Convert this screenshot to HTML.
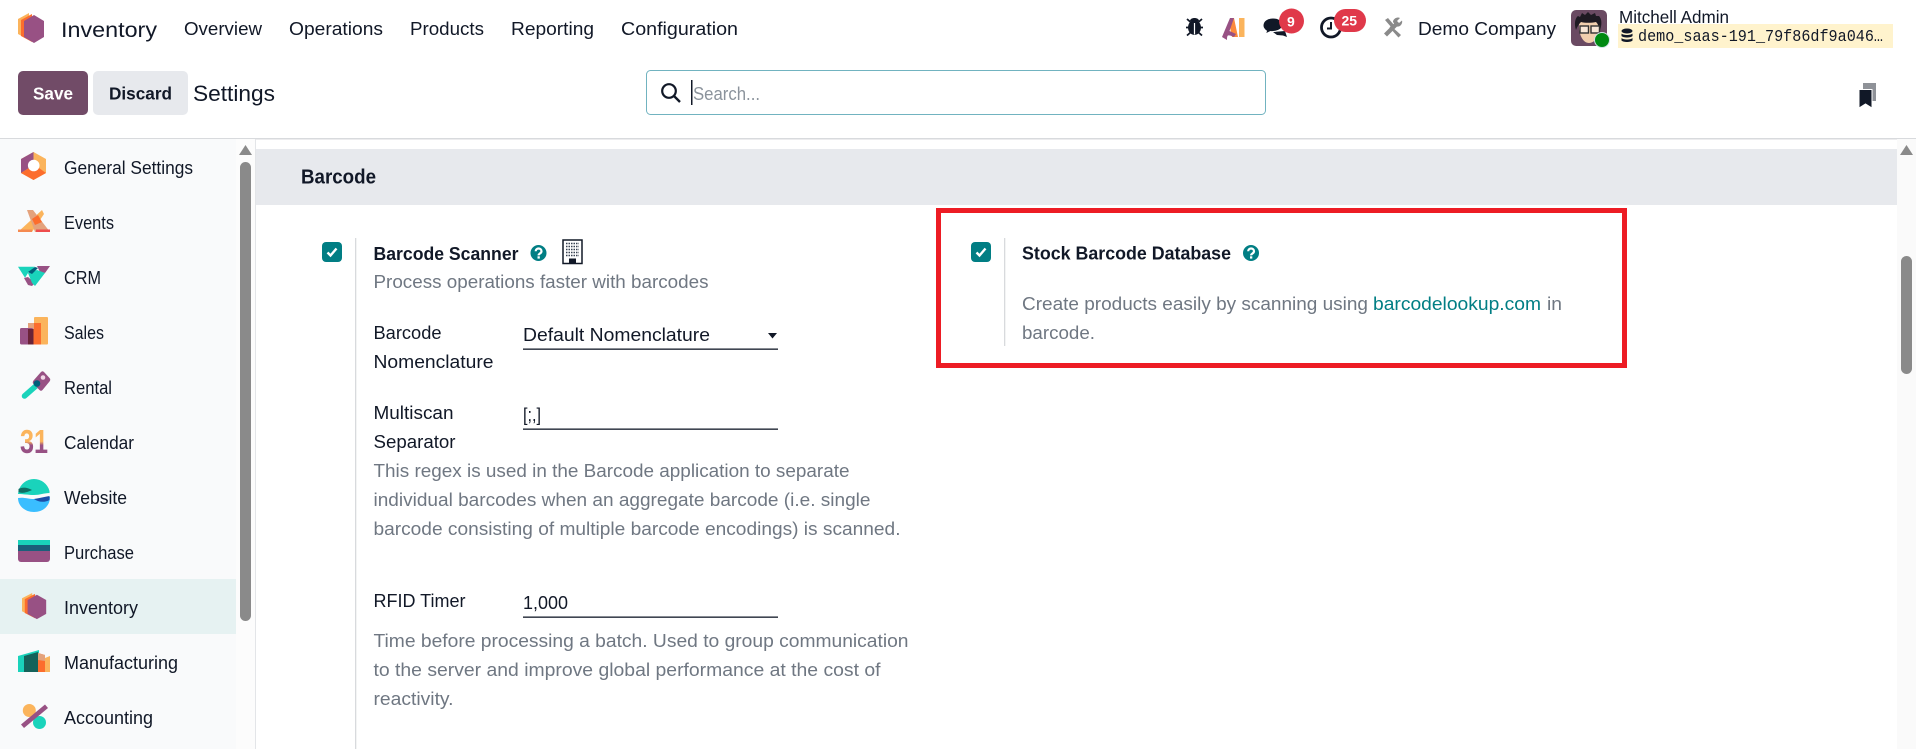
<!DOCTYPE html>
<html lang="en">
<head>
<meta charset="utf-8">
<title>Settings - Inventory</title>
<style>
html,body{margin:0;padding:0;width:1916px;height:749px;overflow:hidden;background:#fff}
svg{display:block}
text{font-family:"Liberation Sans","Noto Sans CJK JP",sans-serif;fill:#111827;font-size:18.5px}
.g{fill:#6f7782}
.b{font-weight:700}
.m{font-family:"Liberation Mono",monospace;font-size:17px}
</style>
</head>
<body>
<svg width="1916" height="749" viewBox="0 0 1916 749" xmlns="http://www.w3.org/2000/svg">
<defs>
<g id="inv">
<polygon points="11,0 0,6 0,21 11,27" fill="#fbb45c"/>
<polygon points="14,1 3,7 3,23 14,29" fill="#fc6d2d"/>
<polygon points="16,2 26,8 26,24 16,30 6,24 6,8" fill="#985184"/>
</g>
<g id="chk">
<rect width="20" height="20" rx="4" fill="#017e84"/>
<path d="M5.500 10.500l3 3 6-7" fill="none" stroke="#fff" stroke-width="2.400"/>
</g>
<g id="help">
<circle cx="8" cy="8" r="8" fill="#017e84"/>
<path d="M5.200 6.200c0-3.600 5.800-3.600 5.800 0 0 2.300-2.900 2.300-2.900 4.200" fill="none" stroke="#fff" stroke-width="2.200"/>
<rect x="7" y="11.300" width="2.300" height="2.300" fill="#fff"/>
</g>
<linearGradient id="g31" x1="0" y1="0" x2="0" y2="1">
<stop offset="0.5" stop-color="#fbb45c"/><stop offset="0.6" stop-color="#985184"/>
</linearGradient>
</defs>

<!-- top bar -->
<use href="#inv" x="18" y="13"/>
<text x="61" y="37" style="font-size:21px" textLength="96" lengthAdjust="spacingAndGlyphs">Inventory</text>
<text x="184" y="35" textLength="78" lengthAdjust="spacingAndGlyphs">Overview</text>
<text x="289" y="35" textLength="94" lengthAdjust="spacingAndGlyphs">Operations</text>
<text x="410" y="35" textLength="74" lengthAdjust="spacingAndGlyphs">Products</text>
<text x="511" y="35" textLength="83" lengthAdjust="spacingAndGlyphs">Reporting</text>
<text x="621" y="35" textLength="117" lengthAdjust="spacingAndGlyphs">Configuration</text>

<!-- systray: bug -->
<g fill="#111827">
<ellipse cx="1194.500" cy="27.500" rx="6.500" ry="7.500"/>
<path d="M1190 21c0-4 9-4 9 0z"/>
<path d="M1187 19l4 3.500M1202 19l-4 3.500M1186 27.500h17M1187 35.500l4-3.500M1202 35.500l-4-3.500" stroke="#111827" stroke-width="1.800" fill="none"/>
<rect x="1193.900" y="23" width="1.200" height="11.500" fill="#fff"/>
</g>
<!-- AI -->
<path d="M1230 18h4l4 19h-6l-1.500-7z" fill="#fc8a3c"/>
<path d="M1222 37l8-19h4l-4.500 13 6.500 3-2 3c-3-1.500-5-2-6-1.500-1 .5-1 3-1 4.500z" fill="#985184"/>
<rect x="1239" y="18" width="5.500" height="19" fill="#fbb45c"/>
<!-- chat -->
<path d="M1273 32l12-1 2 6-4-1.500-6-.5z" fill="#111827"/>
<path d="M1273 18c-6 0-10 3-10 7.500 0 3 2 4.500 3.500 5.500l-1 3 5-2.500c5 .5 12-1.500 12-6.500 0-4.500-4-7-9.500-7z" fill="#111827" stroke="#fff" stroke-width="1"/>
<circle cx="1291.500" cy="21" r="12.500" fill="#e0394a"/>
<text x="1287" y="26.500" style="font-size:14px;fill:#fff" class="b">9</text>
<!-- clock -->
<circle cx="1331" cy="27.500" r="9.500" fill="none" stroke="#111827" stroke-width="2.800"/>
<path d="M1331 22v6.500h-4" fill="none" stroke="#111827" stroke-width="2"/>
<rect x="1334" y="9" width="32" height="23" rx="11.500" fill="#e0394a"/>
<text x="1341.500" y="25.500" style="font-size:14px;fill:#fff" class="b">25</text>
<!-- tools -->
<path d="M1385 20l3-2 6 7-2.500 2.500z" fill="#8a8a8a"/>
<path d="M1391 26l10 9-2.500 2.500-9-10z" fill="#8a8a8a"/>
<path d="M1384 33.500l11-11 3 3-11 11z" fill="#8a8a8a"/>
<path d="M1393 22c0-3 4-5.500 7-4l-3 3 2 2 3-2.500c1 3-2 7-5.500 6z" fill="#8a8a8a"/>
<text x="1418" y="35" textLength="138" lengthAdjust="spacingAndGlyphs">Demo Company</text>

<!-- avatar -->
<rect x="1571" y="10" width="36" height="36" rx="5" fill="#6a4a62"/>
<path d="M1579 26c0-7 4-10 10-10s10 3 10 11c0 9-4 16-10 16s-10-8-10-17z" fill="#f2cfae"/>
<path d="M1576 30c-2-6-1-12 2-14l2 1 2-4 3 2 3-3 3 3 4-2 1 3 3 0c3 3 3 9 1 14-1-3-2-6-4-8-5 1-11 1-15 0-2 2-4 5-5 8z" fill="#1e1a22"/>
<rect x="1580" y="26" width="8.500" height="7" fill="#fff" fill-opacity=".5" stroke="#333" stroke-width="1.400"/>
<rect x="1591" y="26" width="8.500" height="7" fill="#fff" fill-opacity=".5" stroke="#333" stroke-width="1.400"/>
<circle cx="1602" cy="40" r="7.500" fill="#008a12" stroke="#cfe3e6" stroke-width="1"/>

<text x="1619" y="23" style="font-size:17.500px" textLength="110" lengthAdjust="spacingAndGlyphs">Mitchell Admin</text>
<rect x="1618" y="24" width="275" height="24" fill="#fff3cd"/>
<g fill="#111827">
<ellipse cx="1627" cy="31" rx="5.500" ry="2.500"/>
<path d="M1621.500 33.500c1.500 2 9.500 2 11 0v2.500c-1.500 2-9.500 2-11 0z"/>
<path d="M1621.500 38c1.500 2 9.500 2 11 0v2.500c-1.500 2-9.500 2-11 0z"/>
</g>
<text x="1638" y="41" class="m" textLength="245" lengthAdjust="spacingAndGlyphs">demo_saas-191_79f86df9a046…</text>

<!-- control panel -->
<rect x="18" y="71" width="70" height="44" rx="5" fill="#714b67"/>
<text x="33" y="99.500" class="b" style="font-size:17.500px;fill:#fff" textLength="40" lengthAdjust="spacingAndGlyphs">Save</text>
<rect x="93" y="71" width="95" height="44" rx="5" fill="#e7e9ed"/>
<text x="109" y="99.500" class="b" style="font-size:17.500px" textLength="63" lengthAdjust="spacingAndGlyphs">Discard</text>
<text x="193" y="101" style="font-size:22px" textLength="82" lengthAdjust="spacingAndGlyphs">Settings</text>
<rect x="646.500" y="70.500" width="619" height="44" rx="4" fill="#fff" stroke="#71b3c0" stroke-width="1"/>
<circle cx="669" cy="91" r="6.800" fill="none" stroke="#111827" stroke-width="2.200"/>
<path d="M674 96l6 6" stroke="#111827" stroke-width="2.400"/>
<rect x="691" y="80" width="1.500" height="25" fill="#111827"/>
<text x="693" y="100" style="font-size:18.500px;fill:#8b939c" textLength="67" lengthAdjust="spacingAndGlyphs">Search...</text>
<path d="M1863 83h13v18h-13z" fill="#8f9298"/>
<path d="M1859 89.500h13v18.500l-6.500-4-6.500 4z" fill="#111827" stroke="#fff" stroke-width="1"/>

<rect x="0" y="138" width="1916" height="1.500" fill="#d8dadd"/>

<!-- sidebar -->
<rect x="0" y="139" width="236" height="610" fill="#f9fafb"/>
<rect x="236" y="139" width="19" height="610" fill="#fcfcfc"/>
<rect x="255" y="139" width="1" height="610" fill="#e3e5e8"/>
<polygon points="245.500,145 252,155 239,155" fill="#8a8a8a"/>
<rect x="240" y="162" width="11" height="459" rx="5.500" fill="#8a8a8a"/>
<rect x="0" y="579" width="236" height="55" fill="#e6f2f2"/>

<!-- General Settings -->
<polygon points="33.500,152 46,159 46,173 33.500,180 21,173 21,159" fill="#fbb45c"/>
<polygon points="33.500,152 21,159 21,173 29,168 33.500,160" fill="#985184"/>
<polygon points="21,173 33.500,180 46,173 39,168 29,168" fill="#fc6d2d"/>
<circle cx="33.700" cy="165.500" r="5.800" fill="#fff"/>
<!-- Events -->
<polygon points="42,210 18,232 32,232 44,214" fill="#fbb45c"/>
<polygon points="27,210 33,210 50,232 35,232" fill="#e4a27c"/>
<polygon points="32,219 38,215 42,222 35,225" fill="#fc6d2d"/>
<rect x="36" y="229.500" width="14" height="2.500" fill="#ee4c4c"/>
<rect x="18" y="229.500" width="14" height="2.500" fill="#f58a50"/>
<!-- CRM -->
<polygon points="18,266.700 35,266.700 28,273 25,277.700" fill="#1ad3bb"/>
<polygon points="37,266 50,266 45,273 40,272" fill="#985184"/>
<polygon points="24,278 28,277 35,283 32,286 28,285" fill="#985184"/>
<polygon points="28,273 37,270 45,273 35,286 32,283" fill="#1ad3bb"/>
<polygon points="28,272 35,267 38,268 32,274" fill="#005e7a"/>
<!-- Sales -->
<rect x="34" y="317" width="14" height="27.500" rx="1" fill="#fbb45c"/>
<rect x="28" y="323" width="13" height="21.500" fill="#fc6d2d"/>
<rect x="28" y="323" width="6" height="6" fill="#e4a27c"/>
<rect x="20" y="328" width="13" height="16.500" rx="1.500" fill="#985184"/>
<rect x="28" y="329" width="5.500" height="15.500" fill="#6a2338"/>
<!-- Rental -->
<path d="M36 398l-12-0" stroke="none"/>
<path d="M37 385L24.500 396" stroke="#1ad3bb" stroke-width="5.500" stroke-linecap="round" fill="none"/>
<path d="M41 372c1-1 2-1 3 0l5.500 6c1 1 1 2 0 3.500l-7 8.500c-1 1-2 1-3 0l-6-6c-1-1-1-2 0-3.500z" fill="#985184"/>
<circle cx="43" cy="377.500" r="2.300" fill="#f1d7e6"/>
<circle cx="37" cy="383.500" r="3.300" fill="#005e7a"/>
<!-- Calendar -->
<text x="20" y="453" class="b" style="font-size:33px;fill:url(#g31)" textLength="28" lengthAdjust="spacingAndGlyphs">31</text>
<!-- Website -->
<path d="M18.500 491A16 16 0 0 1 49.500 491L49.500 493C44 493 40 495 34 495C28 495 24 494 18 494z" fill="#1ad3bb"/>
<path d="M18 498C24 497 28 499 34 499C40 499 44 497 50 497C50 506 43 512 34 512C25 512 18 506 18 498z" fill="#3abeff"/>
<path d="M18.500 489C22 487 27 487 32 490C28 492 22 494 18.500 492z" fill="#0f6e64"/>
<path d="M34 499C40 498 44 497 49.500 496L49.500 500C44 503 38 502 34 499z" fill="#1c4ea8"/>
<!-- Purchase -->
<path d="M18 551h32v8a3 3 0 0 1-3 3H21a3 3 0 0 1-3-3z" fill="#985184"/>
<rect x="18" y="540" width="32" height="5" fill="#1ad3bb"/>
<rect x="18" y="545" width="32" height="6" fill="#1b5f7a"/>
<!-- Inventory -->
<use href="#inv" transform="translate(22 593) scale(.93 .87)"/>
<!-- Manufacturing -->
<polygon points="18,656 39,650 39,672 18,672" fill="#1ad3bb"/>
<polygon points="24,656 38,652 38,672 24,672" fill="#15625a"/>
<polygon points="38,653 45,655 45,672 38,672" fill="#fc6d2d"/>
<polygon points="38,653 45,655 45,661 38,660" fill="#e4a27c"/>
<polygon points="45,658 50,656 50,672 45,672" fill="#fbb45c"/>
<!-- Accounting -->
<circle cx="29.300" cy="710.500" r="6.500" fill="#fbb45c"/>
<circle cx="39.500" cy="722.500" r="6.500" fill="#1ad3bb"/>
<path d="M21 724.500l24-20 3 3.500-24 20z" fill="#985184"/>

<text x="64" y="174" textLength="129" lengthAdjust="spacingAndGlyphs">General Settings</text>
<text x="64" y="229" textLength="50" lengthAdjust="spacingAndGlyphs">Events</text>
<text x="64" y="284" textLength="37" lengthAdjust="spacingAndGlyphs">CRM</text>
<text x="64" y="339" textLength="40" lengthAdjust="spacingAndGlyphs">Sales</text>
<text x="64" y="394" textLength="48" lengthAdjust="spacingAndGlyphs">Rental</text>
<text x="64" y="449" textLength="70" lengthAdjust="spacingAndGlyphs">Calendar</text>
<text x="64" y="504" textLength="63" lengthAdjust="spacingAndGlyphs">Website</text>
<text x="64" y="559" textLength="70" lengthAdjust="spacingAndGlyphs">Purchase</text>
<text x="64" y="614" textLength="74" lengthAdjust="spacingAndGlyphs">Inventory</text>
<text x="64" y="669" textLength="114" lengthAdjust="spacingAndGlyphs">Manufacturing</text>
<text x="64" y="724" textLength="89" lengthAdjust="spacingAndGlyphs">Accounting</text>

<!-- main -->
<rect x="256" y="149" width="1641" height="56" fill="#e7e9ed"/>
<text x="301" y="183.500" class="b" style="font-size:20px" textLength="75" lengthAdjust="spacingAndGlyphs">Barcode</text>

<rect x="1897" y="139" width="19" height="610" fill="#fafafa"/>
<polygon points="1906.500,145 1913,155 1900,155" fill="#8a8a8a"/>
<rect x="1901" y="256" width="11" height="118" rx="5.500" fill="#8a8a8a"/>

<!-- left setting -->
<use href="#chk" x="322" y="242"/>
<rect x="355" y="238" width="1.300" height="511" fill="#d8dadd"/>
<text x="373.500" y="260" class="b" style="font-size:18.500px" textLength="145" lengthAdjust="spacingAndGlyphs">Barcode Scanner</text>
<use href="#help" x="530.500" y="245"/>
<rect x="563" y="240" width="19" height="23.500" fill="#fff" stroke="#111827" stroke-width="1.500"/>
<path d="M566 243.500h13M566 246.500h13M566 249.500h13M566 252.500h13M566 255.500h13" stroke="#374151" stroke-width="1.500" stroke-dasharray="1.500 1" fill="none"/>
<rect x="569" y="258.500" width="7" height="5" fill="#111827"/>
<text x="373.500" y="288" class="g" textLength="335" lengthAdjust="spacingAndGlyphs">Process operations faster with barcodes</text>

<text x="373.500" y="339" textLength="68" lengthAdjust="spacingAndGlyphs">Barcode</text>
<text x="373.500" y="368" textLength="120" lengthAdjust="spacingAndGlyphs">Nomenclature</text>
<text x="523" y="341" textLength="187" lengthAdjust="spacingAndGlyphs">Default Nomenclature</text>
<polygon points="768,333 777,333 772.500,338.500" fill="#111827"/>
<rect x="523" y="348.500" width="255" height="1.300" fill="#111827"/>

<text x="373.500" y="419" textLength="80" lengthAdjust="spacingAndGlyphs">Multiscan</text>
<text x="373.500" y="448" textLength="82" lengthAdjust="spacingAndGlyphs">Separator</text>
<text x="523" y="421" textLength="18" lengthAdjust="spacingAndGlyphs">[;,]</text>
<rect x="523" y="428.500" width="255" height="1.300" fill="#111827"/>

<text x="373.500" y="477" class="g" textLength="476" lengthAdjust="spacingAndGlyphs">This regex is used in the Barcode application to separate</text>
<text x="373.500" y="506" class="g" textLength="497" lengthAdjust="spacingAndGlyphs">individual barcodes when an aggregate barcode (i.e. single</text>
<text x="373.500" y="535" class="g" textLength="527" lengthAdjust="spacingAndGlyphs">barcode consisting of multiple barcode encodings) is scanned.</text>

<text x="373.500" y="607" textLength="92" lengthAdjust="spacingAndGlyphs">RFID Timer</text>
<text x="523" y="609" textLength="45" lengthAdjust="spacingAndGlyphs">1,000</text>
<rect x="523" y="616.500" width="255" height="1.300" fill="#111827"/>

<text x="373.500" y="647" class="g" textLength="535" lengthAdjust="spacingAndGlyphs">Time before processing a batch. Used to group communication</text>
<text x="373.500" y="676" class="g" textLength="507" lengthAdjust="spacingAndGlyphs">to the server and improve global performance at the cost of</text>
<text x="373.500" y="705" class="g" textLength="80" lengthAdjust="spacingAndGlyphs">reactivity.</text>

<!-- right setting -->
<use href="#chk" x="971" y="242"/>
<rect x="1004" y="238" width="1.300" height="108" fill="#d8dadd"/>
<text x="1022" y="259.500" class="b" style="font-size:18.500px" textLength="209" lengthAdjust="spacingAndGlyphs">Stock Barcode Database</text>
<use href="#help" x="1243" y="245"/>
<text x="1022" y="310" class="g" textLength="346" lengthAdjust="spacingAndGlyphs">Create products easily by scanning using</text>
<text x="1373" y="310" style="fill:#017e84" textLength="168" lengthAdjust="spacingAndGlyphs">barcodelookup.com</text>
<text x="1547" y="310" class="g" textLength="15" lengthAdjust="spacingAndGlyphs">in</text>
<text x="1022" y="339" class="g" textLength="73" lengthAdjust="spacingAndGlyphs">barcode.</text>

<rect x="938.500" y="210.500" width="686" height="155" fill="none" stroke="#ed1c24" stroke-width="5"/>
</svg>
</body>
</html>
